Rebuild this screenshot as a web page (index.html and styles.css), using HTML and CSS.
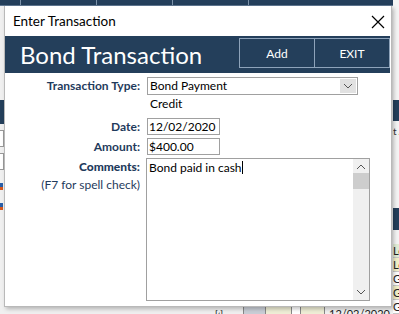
FILE: index.html
```html
<!DOCTYPE html>
<html lang="en">
<head>
  <meta charset="UTF-8" />
  <title>Enter Transaction</title>
  <link rel="stylesheet" href="styles.css">
</head>
<body>
  <div class="app">
    <div class="topbar">
      <span class="tab"></span><span class="tab"></span><span class="tab"></span><span class="tab"></span>
    </div>
    <div class="side side-left">
      <div class="band"></div>
      <div class="box"></div>
      <div class="box"></div>
      <div class="mark"></div>
      <div class="mark"></div>
    </div>
    <div class="side side-right">
      <div class="band"></div>
      <div class="peek">t A</div>
      <div class="band band-low"></div>
      <div class="cell c-blue">Lo</div>
      <div class="cell c-yellow">Lo</div>
      <div class="cell">G</div>
      <div class="cell c-yellow">G</div>
      <div class="cell">G</div>
    </div>
    <div class="bottomrow">
      <span class="bcell nav">[&lsaquo;]</span>
      <span class="bcell grey"></span>
      <span class="bcell pale"></span>
      <span class="bcell blank"></span>
      <span class="bcell pale small"></span>
      <span class="bcell date">12/02/2020</span>
    </div>
  </div>

  <div class="dialog">
    <div class="titlebar">
      <span>Enter Transaction</span>
      <svg class="close" width="14" height="14" viewBox="0 0 14 14">
        <path d="M1 1 L13 13 M13 1 L1 13" stroke="#000" stroke-width="1.2" fill="none"/>
      </svg>
    </div>

    <div class="banner">
      <h1>Bond Transaction</h1>
      <div class="actions">
        <button>Add</button>
        <button>EXIT</button>
      </div>
    </div>

    <div class="form">
      <label class="lbl">Transaction Type:</label>
      <div class="select">
        <span>Bond Payment</span>
        <span class="drop">
          <svg width="10" height="6" viewBox="0 0 10 6"><path d="M1 1 L5 5 L9 1" stroke="#555" fill="none"/></svg>
        </span>
      </div>

      <span></span>
      <div class="credit">Credit</div>

      <label class="lbl row-date">Date:</label>
      <div class="field row-date">12/02/2020</div>

      <label class="lbl">Amount:</label>
      <div class="field">$400.00</div>

      <div class="lbl notes">
        <b>Comments:</b>
        <span>(F7 for spell check)</span>
      </div>
      <div class="memo">
        <div class="memo-text">Bond paid in cash<span class="caret"></span></div>
        <div class="scroll">
          <svg width="10" height="6" viewBox="0 0 10 6"><path d="M1 5 L5 1 L9 5" stroke="#555" fill="none"/></svg>
          <div class="thumb"></div>
          <div class="track"></div>
          <svg width="10" height="6" viewBox="0 0 10 6"><path d="M1 1 L5 5 L9 1" stroke="#555" fill="none"/></svg>
        </div>
      </div>
    </div>
  </div>
</body>
</html>
```

FILE: styles.css
```css
body {
  margin: 0;
  width: 399px;
  height: 314px;
  overflow: hidden;
  font-family: Lato, "Noto Sans", sans-serif;
  font-size: 12px;
  background: #f0f0f0;
  position: relative;
}

/* the main window behind the dialog */
.app {
  width: 399px;
  height: 314px;
  position: relative;
}
.topbar {
  height: 6px;
  background: #243f5b;
  display: flex;
  border-bottom: 1px solid #5f7791;
  box-sizing: border-box;
}
.topbar .tab {
  width: 75px;
  border-left: 1px solid #7d93aa;
}
.topbar .tab:first-child {
  margin-left: 20px;
}
.side {
  position: absolute;
  top: 0;
  display: flex;
  flex-direction: column;
}
.side-left {
  left: 0;
  width: 4px;
  padding-top: 100px;
}
.side-left .band {
  height: 24px;
  background: #243f5b;
}
.side-left .box {
  height: 15px;
  margin-top: 6px;
  border: 1px solid #999;
  border-left: none;
  background: #fff;
}
.side-left .mark {
  height: 7px;
  width: 3px;
  margin-top: 13px;
  background: linear-gradient(#2a5fa8 50%, #d65a1e 50%);
}
.side-right {
  left: 393px;
  width: 6px;
  padding-top: 100px;
  background: #f5f5f5;
  height: 214px;
  overflow: hidden;
}
.side-right .band {
  height: 24px;
  background: #243f5b;
}
.side-right .band-low {
  margin-top: 70px;
  height: 25px;
}
.side-right .peek {
  font-size: 10px;
  line-height: 14px;
  margin-top: 3px;
  color: #333;
  white-space: nowrap;
}
.side-right .cell {
  height: 13px;
  font-size: 11px;
  line-height: 13px;
  color: #222;
  border-bottom: 1px solid #c8c8c8;
  background: #fff;
}
.side-right .band-low + .cell {
  margin-top: 14px;
}
.c-blue {
  background: #e2edd6 !important;
}
.c-yellow {
  background: #f3f0c8 !important;
}
.bottomrow {
  position: absolute;
  left: 0;
  top: 306px;
  width: 399px;
  height: 8px;
  display: flex;
  padding-left: 213px;
  box-sizing: border-box;
  overflow: hidden;
  font-size: 11px;
  line-height: 12px;
}
.bcell {
  border-left: 1px solid #888;
  height: 8px;
}
.bcell.nav {
  width: 30px;
  font-size: 9px;
  line-height: 16px;
  padding-left: 2px;
  box-sizing: border-box;
  border-left: none;
}
.bcell.grey { width: 21px; background: #c9ced6; }
.bcell.pale { width: 25px; background: #efeed6; }
.bcell.blank { width: 8px; background: #fff; }
.bcell.small { width: 23px; }
.bcell.date { width: 68px; padding-left: 4px; line-height: 16px; color: #222; }

/* dialog */
.dialog {
  position: absolute;
  left: 4px;
  top: 6px;
  width: 388px;
  height: 301px;
  background: #fff;
  border: 1px solid #b9b9b9;
  border-top: none;
  box-sizing: border-box;
  box-shadow: 2px 2px 4px rgba(0, 0, 0, 0.25);
  display: flex;
  flex-direction: column;
}
.titlebar {
  height: 30px;
  display: flex;
  align-items: center;
  justify-content: space-between;
  padding: 0 6px 0 8px;
  font-size: 13.5px;
  color: #000;
}
.close {
  margin-top: 2px;
}
.banner {
  height: 37px;
  margin-right: 1px;
  background: #243f5b;
  display: flex;
  justify-content: space-between;
}
.banner h1 {
  margin: 0;
  padding-left: 15px;
  font-weight: normal;
  font-size: 24px;
  line-height: 37px;
  color: #fff;
}
.actions {
  display: flex;
  margin-top: 2px;
  height: 30px;
}
.actions button {
  font-family: inherit;
  font-size: 12px;
  color: #fff;
  background: #243f5b;
  border: 1px solid #8ea3ba;
  width: 76px;
  padding: 0;
}
.actions button + button {
  border-left: none;
  width: 75px;
}
.form {
  display: grid;
  grid-template-columns: 135px 1fr;
  column-gap: 7px;
  padding-top: 4px;
  align-items: start;
}
.lbl {
  text-align: right;
  font-weight: bold;
  color: #1f3b5c;
  line-height: 17px;
  white-space: nowrap;
}
.select {
  width: 211px;
  height: 18px;
  border: 1px solid #a0a0a0;
  box-sizing: border-box;
  display: flex;
  justify-content: space-between;
  padding-left: 2px;
  line-height: 16px;
}
.drop {
  width: 16px;
  margin: 1px;
  background: #e1e1e1;
  display: flex;
  align-items: center;
  justify-content: center;
}
.credit {
  padding-left: 3px;
  line-height: 17px;
}
.row-date {
  margin-top: 6px;
}
.field {
  width: 73px;
  height: 17px;
  border: 1px solid #a0a0a0;
  box-sizing: border-box;
  padding-left: 1px;
  line-height: 15px;
  margin-bottom: 3px;
}
.notes {
  display: flex;
  flex-direction: column;
}
.notes span {
  font-weight: normal;
  margin-top: 1px;
}
.memo {
  width: 224px;
  height: 143px;
  margin-left: -1px;
  border: 1px solid #a0a0a0;
  box-sizing: border-box;
  display: flex;
  justify-content: space-between;
}
.memo-text {
  padding: 1px 2px;
  line-height: 15px;
}
.caret {
  display: inline-block;
  width: 1px;
  height: 13px;
  background: #000;
  vertical-align: -2px;
}
.scroll {
  width: 16px;
  background: #f0f0f0;
  display: flex;
  flex-direction: column;
  align-items: center;
}
.scroll svg {
  margin: 5px 0;
}
.thumb {
  width: 16px;
  height: 16px;
  background: #cdcdcd;
  margin-top: -2px;
}
.track {
  flex: 1;
}
```
